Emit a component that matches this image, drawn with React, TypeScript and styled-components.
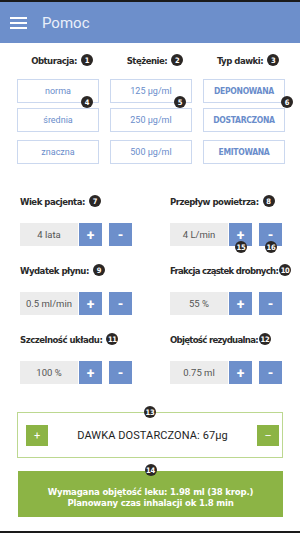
import * as React from 'react';
import styled, { createGlobalStyle } from 'styled-components';

const Global = createGlobalStyle`
  html, body {
    margin: 0;
    padding: 0;
    background: #ffffff;
  }
`;

const Screen = styled.div`
  width: 300px;
  height: 533px;
  box-sizing: border-box;
  border-top: 2px solid #1a1a1a;
  border-bottom: 2px solid #1a1a1a;
  display: flex;
  flex-direction: column;
  font-family: Roboto, 'Liberation Sans', sans-serif;
  overflow: hidden;
`;

const Header = styled.div`
  height: 41px;
  background-color: #6d8fcb;
  display: flex;
  align-items: center;
  padding-left: 10px;
`;

const Burger = styled.div`
  width: 17px;
  display: flex;
  flex-direction: column;
  gap: 3px;
  margin-right: 15px;

  span {
    display: block;
    height: 2px;
    background: #ffffff;
  }
`;

const HeaderTitle = styled.span`
  color: #eaf0fa;
  font-size: 15px;
  font-weight: 400;
`;

const Badge = styled.span`
  display: inline-flex;
  align-items: center;
  justify-content: center;
  width: 12px;
  height: 12px;
  border-radius: 50%;
  background: #2b2725;
  color: #ffffff;
  font-family: 'DejaVu Sans Condensed', 'DejaVu Sans', sans-serif;
  font-weight: bold;
  font-size: 7.5px;
  letter-spacing: -0.3px;
  flex-shrink: 0;
`;

const OverBadge = styled(Badge)<{ $right?: number; $bottom?: number }>`
  position: absolute;
  right: ${(p) => p.$right ?? 0}px;
  bottom: ${(p) => p.$bottom ?? 0}px;
`;

const Label = styled.div<{ $tight?: boolean }>`
  display: flex;
  align-items: center;
  gap: ${(p) => (p.$tight ? 1 : 4)}px;
  height: 12px;
  font-family: 'DejaVu Sans Condensed', 'DejaVu Sans', sans-serif;
  font-weight: bold;
  font-size: 9.5px;
  color: #2a2a2a;
  white-space: nowrap;
  letter-spacing: ${(p) => (p.$tight ? -0.7 : -0.5)}px;
`;

const OptionGrid = styled.div`
  display: grid;
  grid-template-columns: repeat(3, 82px);
  column-gap: 11px;
  padding: 11px 15px 0 17px;
`;

const OptionColumn = styled.div`
  display: flex;
  flex-direction: column;
  align-items: stretch;
`;

const ColumnHead = styled(Label)`
  justify-content: center;
  margin-bottom: 13px;
  padding-left: 8px;
`;

const OptionWrap = styled.div<{ $gap: number }>`
  position: relative;
  margin-bottom: ${(p) => p.$gap}px;
`;

const Option = styled.div<{ $caps?: boolean }>`
  height: 24px;
  box-sizing: border-box;
  border: 1px solid #cbd8ef;
  display: flex;
  align-items: center;
  justify-content: center;
  color: #6a8dcb;
  font-size: 9px;
  ${(p) =>
    p.$caps &&
    `
    font-family: 'DejaVu Sans Condensed', 'DejaVu Sans', sans-serif;
    font-weight: bold;
    font-size: 8.5px;
    letter-spacing: -0.3px;
  `}
`;

const StepperGrid = styled.div`
  display: grid;
  grid-template-columns: 150px 150px;
  row-gap: 18px;
  padding-top: 31px;
`;

const Field = styled.div`
  display: flex;
  flex-direction: column;
  padding-left: 20px;
  gap: 16px;
`;

const Stepper = styled.div`
  display: flex;
  align-items: center;
  height: 23px;
`;

const Value = styled.div`
  width: 58px;
  height: 23px;
  background: #ececec;
  display: flex;
  align-items: center;
  justify-content: center;
  color: #555555;
  font-size: 9.5px;
`;

const StepButton = styled.div<{ $gapLeft?: number }>`
  position: relative;
  width: 23px;
  height: 23px;
  margin-left: ${(p) => p.$gapLeft ?? 0}px;
  background: #6d8fcb;
  color: #ffffff;
  display: flex;
  align-items: center;
  justify-content: center;
  font-weight: bold;
  font-size: 14px;
`;

const DoseBox = styled.div`
  position: relative;
  margin: 28px 17px 0 17px;
  height: 46px;
  box-sizing: border-box;
  border: 1px solid #bcd890;
  display: flex;
  align-items: center;
  justify-content: space-between;
  padding: 0 3px 0 8px;
`;

const GreenButton = styled.div`
  width: 22px;
  height: 21px;
  background: #8cb445;
  color: #ffffff;
  display: flex;
  align-items: center;
  justify-content: center;
  font-size: 11px;
`;

const DoseText = styled.span`
  color: #1e1e1e;
  font-size: 11px;
  letter-spacing: 0.1px;
`;

const TopBadge = styled(Badge)`
  position: absolute;
  top: -7px;
  left: 50%;
  transform: translateX(-50%);
`;

const InfoBox = styled.div`
  position: relative;
  margin: 13px 17px 0 18px;
  height: 46px;
  background: #8cb445;
  color: #ffffff;
  display: flex;
  flex-direction: column;
  align-items: center;
  justify-content: center;
  padding-top: 5px;
  box-sizing: border-box;
  font-family: 'DejaVu Sans Condensed', 'DejaVu Sans', sans-serif;
  font-weight: bold;
  font-size: 9.5px;
  letter-spacing: -0.2px;
  line-height: 11px;
`;

type Opt = { text: string; gap: number; badge?: number };

const columns: { title: string; badge: number; caps?: boolean; items: Opt[] }[] = [
  {
    title: 'Obturacja:',
    badge: 1,
    items: [
      { text: 'norma', gap: 5, badge: 4 },
      { text: 'średnia', gap: 8 },
      { text: 'znaczna', gap: 0 },
    ],
  },
  {
    title: 'Stężenie:',
    badge: 2,
    items: [
      { text: '125 µg/ml', gap: 5, badge: 5 },
      { text: '250 µg/ml', gap: 8 },
      { text: '500 µg/ml', gap: 0 },
    ],
  },
  {
    title: 'Typ dawki:',
    badge: 3,
    caps: true,
    items: [
      { text: 'DEPONOWANA', gap: 5, badge: 6 },
      { text: 'DOSTARCZONA', gap: 8 },
      { text: 'EMITOWANA', gap: 0 },
    ],
  },
];

const fields = [
  { label: 'Wiek pacjenta:', badge: 7, value: '4 lata' },
  { label: 'Przepływ powietrza:', badge: 8, value: '4 L/min', extra: true },
  { label: 'Wydatek płynu:', badge: 9, value: '0.5 ml/min' },
  { label: 'Frakcja cząstek drobnych:', badge: 10, value: '55 %', tight: true },
  { label: 'Szczelność układu:', badge: 11, value: '100 %' },
  { label: 'Objętość rezydualna:', badge: 12, value: '0.75 ml', tight: true },
];

const App: React.FC = () => {
  return (
    <Screen>
      <Global />
      <Header>
        <Burger>
          <span />
          <span />
          <span />
        </Burger>
        <HeaderTitle>Pomoc</HeaderTitle>
      </Header>

      <OptionGrid>
        {columns.map((col, ci) => (
          <OptionColumn key={col.title}>
            <ColumnHead>
              {col.title}
              <Badge>{col.badge}</Badge>
            </ColumnHead>
            {col.items.map((it) => (
              <OptionWrap key={it.text} $gap={it.gap}>
                <Option $caps={col.caps}>{it.text}</Option>
                {it.badge && (
                  <OverBadge $right={ci === 2 ? -8 : 6} $bottom={-5}>
                    {it.badge}
                  </OverBadge>
                )}
              </OptionWrap>
            ))}
          </OptionColumn>
        ))}
      </OptionGrid>

      <StepperGrid>
        {fields.map((f) => (
          <Field key={f.label}>
            <Label $tight={f.tight}>
              {f.label}
              <Badge>{f.badge}</Badge>
            </Label>
            <Stepper>
              <Value>{f.value}</Value>
              <StepButton $gapLeft={1}>
                +{f.extra && <OverBadge $right={5} $bottom={-7}>15</OverBadge>}
              </StepButton>
              <StepButton $gapLeft={7}>
                -{f.extra && <OverBadge $right={5} $bottom={-7}>16</OverBadge>}
              </StepButton>
            </Stepper>
          </Field>
        ))}
      </StepperGrid>

      <DoseBox>
        <TopBadge>13</TopBadge>
        <GreenButton>+</GreenButton>
        <DoseText>DAWKA DOSTARCZONA: 67µg</DoseText>
        <GreenButton>–</GreenButton>
      </DoseBox>

      <InfoBox>
        <TopBadge>14</TopBadge>
        <span>Wymagana objętość leku: 1.98 ml (38 krop.)</span>
        <span>Planowany czas inhalacji ok 1.8 min</span>
      </InfoBox>
    </Screen>
  );
};

export default App;
